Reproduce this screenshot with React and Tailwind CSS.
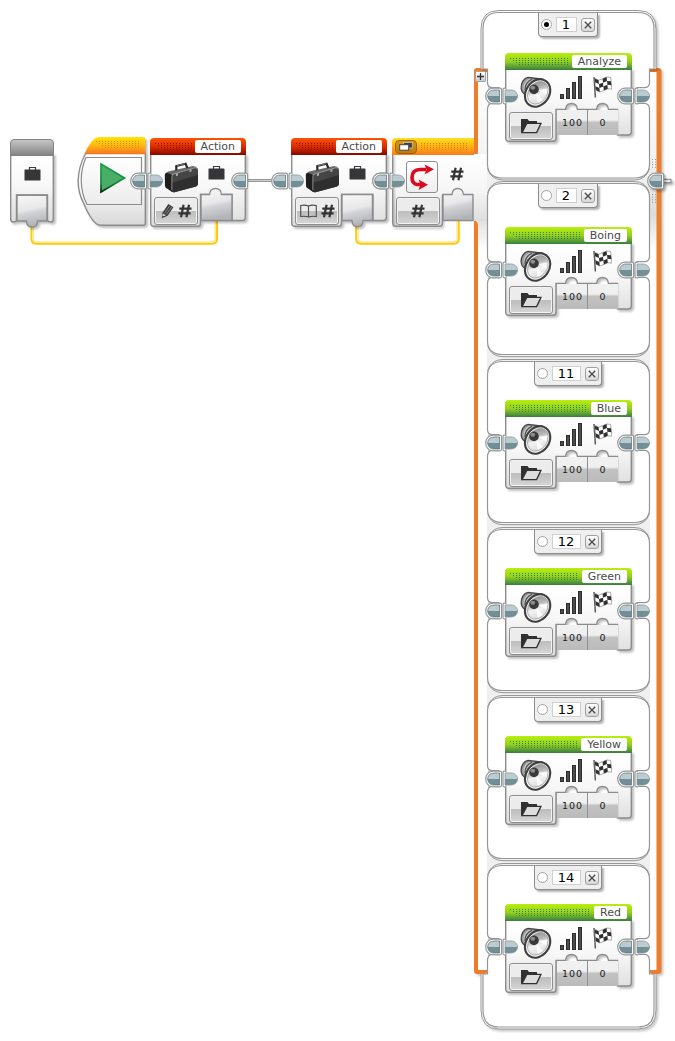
import { useId } from 'react'

const cases = [
  { id: '1', sound: 'Analyze', active: true, height: 171, pad: 43 },
  { id: '2', sound: 'Boing', height: 178, pad: 46 },
  { id: '11', sound: 'Blue', height: 168, pad: 41 },
  { id: '12', sound: 'Green', height: 168, pad: 41 },
  { id: '13', sound: 'Yellow', height: 168, pad: 41 },
  { id: '14', sound: 'Red', height: 167, pad: 41 },
]

const LINE = '#8c8c8c'
const THIN = '#979797'

// Puzzle-shaped body behind a block's contents
function Shape({ width, height, d, children }) {
  const id = useId()
  return (
    <svg
      width={width}
      height={height}
      className="absolute top-0 left-0 overflow-visible drop-shadow-[2px_2px_1px_rgba(0,0,0,0.25)]"
    >
      <defs>
        <linearGradient id={id} x1="0" y1="0" x2="0" y2="1">
          <stop offset="0" stopColor="#ffffff" />
          <stop offset="0.45" stopColor="#f8f8f8" />
          <stop offset="1" stopColor="#dcdcdc" />
        </linearGradient>
      </defs>
      <path d={d} fill={`url(#${id})`} stroke={LINE} strokeWidth="1.4" />
      {children}
    </svg>
  )
}

function Port({ d }) {
  const id = useId()
  return (
    <>
      <defs>
        <linearGradient id={id} x1="0" y1="0" x2="0.2" y2="1">
          <stop offset="0" stopColor="#f8f8f8" />
          <stop offset="0.5" stopColor="#e8e8ea" />
          <stop offset="0.62" stopColor="#d2d3d6" />
          <stop offset="1" stopColor="#b2b4b8" />
        </linearGradient>
      </defs>
      <path d={d} fill={`url(#${id})`} stroke={LINE} strokeWidth="1.4" />
    </>
  )
}

function PlugOut({ className }) {
  return (
    <svg width="18" height="18" className={`absolute overflow-visible ${className}`}>
      <path d="M15 1.2 H8 C3.5 1.2 0.7 5 0.7 9 C0.7 13 3.5 16.8 8 16.8 H15 Q16.6 16.8 16.6 15 V3 Q16.6 1.2 15 1.2 Z" fill="#fff" stroke={THIN} strokeWidth="1.2" />
      <path d="M14.5 3 H9 C5 3 2.7 6 2.7 9 H14.5 Z" fill="#bccbd0" />
      <path d="M14.5 9 H2.7 C2.7 12 5 15 9 15 H14.5 Z" fill="#738f96" />
      <path d="M14.5 3 H9 C5 3 2.7 6 2.7 9 C2.7 12 5 15 9 15 H14.5 Z" fill="none" stroke="#5f7a81" strokeWidth="0.8" />
    </svg>
  )
}

function PlugIn({ className }) {
  return (
    <svg width="17" height="18" className={`absolute ${className}`}>
      <path d="M4 1.2 H2.4 Q1 1.2 1 3 V15 Q1 16.8 2.4 16.8 H4" fill="#fff" stroke={THIN} strokeWidth="1.2" />
      <path d="M3 3 H9 C13 3 15.5 6 15.5 9 H3 Z" fill="#bccbd0" />
      <path d="M3 9 H15.5 C15.5 12 13 15 9 15 H3 Z" fill="#738f96" />
      <path d="M3 3 H9 C13 3 15.5 6 15.5 9 C15.5 12 13 15 9 15 H3 Z" fill="none" stroke="#7d949a" strokeWidth="0.7" />
    </svg>
  )
}

// Grip texture, each row starting one dot further in
function Dots({ color, className }) {
  const id = useId()
  return (
    <svg height="7" className={className} shapeRendering="crispEdges">
      <defs>
        <pattern id={id} width="3" height="2" patternUnits="userSpaceOnUse">
          <rect width="1" height="1" fill={color} />
        </pattern>
      </defs>
      <rect width="100%" height="1" fill={`url(#${id})`} />
      <rect x="3" y="2" width="100%" height="1" fill={`url(#${id})`} />
      <rect x="6" y="4" width="100%" height="1" fill={`url(#${id})`} />
      <rect x="9" y="6" width="100%" height="1" fill={`url(#${id})`} />
    </svg>
  )
}

function Label({ children }) {
  return (
    <span className="flex h-[13px] shrink-0 items-center rounded-[2px] bg-white px-[6px] text-[11px] leading-none text-[#4a4a4a]">
      {children}
    </span>
  )
}

function BigButton({ children }) {
  return (
    <div className="flex h-[28px] w-[44px] items-center justify-center gap-[4px] rounded-[3px] border border-[#8f8f8f] bg-linear-to-b from-[#ececec] from-50% via-[#bdbdbd] via-52% to-[#d6d6d6] shadow-[inset_0_0_0_1px_#f2f2f2]">
      {children}
    </div>
  )
}

function Hash() {
  return (
    <svg width="14" height="14" viewBox="0 0 14 14" stroke="#333" strokeWidth="2.2">
      <path d="M5.6 0.8 L3 13.2 M11 0.8 L8.4 13.2 M1.3 4.7 H13.5 M0.4 9.4 H12.6" />
    </svg>
  )
}

function SmallCase() {
  return (
    <svg width="17" height="15" viewBox="0 0 17 15">
      <path d="M5.5 4 V1.5 H11.5 V4" fill="none" stroke="#3a3a3a" strokeWidth="1.2" />
      <rect x="0.5" y="3.5" width="16" height="11" rx="0.6" fill="#363638" />
    </svg>
  )
}

function BigCase() {
  return (
    <svg width="35" height="31" viewBox="0 0 35 31">
      <path d="M1 11.5 L4 9.5 L29 4 L33 5 L8 12.5 Z" fill="#6a6a6a" />
      <path d="M12.3 8.6 L12.3 4 L21.6 1.8 L23.4 6.2" fill="none" stroke="#2a2a2a" strokeWidth="2.2" />
      <path d="M13 3.6 L21 1.7" stroke="#8a8a8a" strokeWidth="0.8" />
      <path d="M0.8 13 Q0.8 10.6 3 11 L8 12.5 V30 L3 26.5 Q1 25.5 1 24 Z" fill="#1e1e1e" />
      <path d="M7.5 14.5 Q7.5 12.6 9.5 12 L31 5.6 Q34 5 34 7.6 V21.5 Q34 23.6 32 24.4 L10.5 30.2 Q8 30.6 7.5 28.4 Z" fill="#454545" />
      <path d="M7.5 21 L34 13 V21.5 Q34 23.6 32 24.4 L10.5 30.2 Q8 30.6 7.5 28.4 Z" fill="#2f2f2f" />
      <path d="M7.9 28 V14.5 Q8 12.7 9.5 12.2 L31 5.8 Q33.6 5.3 33.6 7.6" fill="none" stroke="#9c9c9c" strokeWidth="0.8" />
      <path d="M12 11.6 l2 -0.6 v2.6 l-2 0.6z M25.5 7.6 l2 -0.6 v2.6 l-2 0.6z" fill="#aaa" />
    </svg>
  )
}

function Speaker() {
  const id = useId()
  return (
    <svg width="32" height="33" viewBox="0 0 32 33">
      <defs>
        <linearGradient id={id} x1="0" y1="0" x2="1" y2="1">
          <stop offset="0" stopColor="#858585" />
          <stop offset="0.35" stopColor="#b5b5b5" />
          <stop offset="0.55" stopColor="#f4f4f4" />
          <stop offset="1" stopColor="#cfcfcf" />
        </linearGradient>
      </defs>
      <path d="M8 1.3 C4 2 0.6 7 1.2 12.5 C1.6 15.5 3 17.5 5.5 18.5 L9 26 L22 3 Z" fill="#9a9a9a" stroke="#444" strokeWidth="1.3" />
      <path d="M9 3 C5 5 3 9 3.6 14 L7 17 L14 4 Z" fill="#c9c9c9" />
      <path d="M5 14 C5 9 8 5 12 3.4" fill="none" stroke="#555" strokeWidth="1.4" />
      <ellipse cx="17.6" cy="17" rx="11.6" ry="14.6" transform="rotate(35 17.6 17)" fill="#f5f5f5" stroke="#3f3f3f" strokeWidth="2.1" />
      <ellipse cx="17.8" cy="16.8" rx="9.3" ry="12.2" transform="rotate(35 17.8 16.8)" fill={`url(#${id})`} stroke="#8a8a8a" strokeWidth="0.6" />
      <path d="M17 14 L27.5 12.5 L26.5 18 Z M16 16 L23 24 L17.5 27 Z" fill="#fff" opacity="0.8" />
      <circle cx="14" cy="13.4" r="4.8" fill="#3a3a3a" />
      <ellipse cx="12.8" cy="11.8" rx="2.4" ry="2" fill="#8c8c8c" />
    </svg>
  )
}

function Bars() {
  return (
    <svg width="23" height="23" viewBox="0 0 23 23" fill="#4c4c4c" stroke="#2e2e2e" strokeWidth="1">
      <rect x="0.5" y="18.5" width="3" height="4" />
      <rect x="6.5" y="12.5" width="3" height="10" />
      <rect x="12.5" y="6.5" width="3" height="16" />
      <rect x="18.5" y="0.5" width="3" height="22" />
    </svg>
  )
}

const flagX = [1.6, 5.6, 9.6, 13.6, 17.6]
const flagY = [2.4, 4.2, 2.8, 1, 1.4]
const flagCells = flagX.slice(1).flatMap((_, c) =>
  [0, 1, 2]
    .filter((r) => (r + c) % 2 === 0)
    .map((r) => {
      const lean = r * 0.4
      const top = r * 3.9
      return `M${flagX[c] + lean} ${flagY[c] + top} L${flagX[c + 1] + lean} ${flagY[c + 1] + top} l0.4 3.9 L${
        flagX[c] + lean + 0.4
      } ${flagY[c] + top + 3.9} Z`
    }),
)

function Flag() {
  return (
    <svg width="19" height="22" viewBox="0 0 19 22">
      <path d="M1 1 L2.4 21.5" stroke="#555" strokeWidth="1.4" />
      <path d="M1.6 2.4 L5.6 4.2 L9.6 2.8 L13.6 1 L17.6 1.4 L18.8 13.1 L14.8 12.7 L10.8 14.5 L6.8 15.9 L2.8 14.1 Z" fill="#fff" stroke="#777" strokeWidth="0.6" />
      <path d={flagCells.join(' ')} fill="#303030" />
    </svg>
  )
}

function Folder() {
  return (
    <svg width="22" height="16" viewBox="0 0 22 16">
      <path d="M1 14.5 V1 H7.5 L9 3 H17 V5.5 H6.5 L3 14.5 Z" fill="#303030" />
      <path d="M2 14.6 L6.8 5.4 H21 L16.6 14.6 Z" fill="#dcdcdc" stroke="#303030" strokeWidth="1.3" />
    </svg>
  )
}

function Pencil() {
  return (
    <svg width="13" height="16" viewBox="0 0 13 16">
      <path d="M0.8 15.2 L1.6 9.5 L7.4 1 L12.4 4.2 L6.6 12.8 Z" fill="#3a3a3a" />
      <path d="M3.4 10.4 L8.8 2.6 M5.2 11.6 L10.8 3.8" stroke="#aaa" strokeWidth="0.7" />
      <path d="M1.4 13.4 L2 10.6 L4.8 12.4 Z" fill="#ddd" />
    </svg>
  )
}

function Book() {
  return (
    <svg width="17" height="15" viewBox="0 0 17 15" fill="none" stroke="#4a4a4a">
      <path d="M0.7 12.5 V1.5 Q5 0.5 8.5 2 Q12 0.5 16.3 1.5 V12.5 Q12 11.8 8.5 13 Q5 11.8 0.7 12.5 Z M8.5 2 V13.5" strokeWidth="1.1" />
    </svg>
  )
}

const SOUND =
  'M0.7 16 V85 Q0.7 88.3 4 88.3 H48 Q51 88.3 51 85 V56.5 H60.5 Q61 50.5 66.5 50.5 Q72 50.5 72.5 56.5 H91.5 Q92 50.5 97.5 50.5 Q103 50.5 103.5 56.5 H112.5 V82 H123 Q126.3 82 126.3 79 V16 Z'

function SoundBlock({ name }) {
  return (
    <div className="relative h-[89px] w-[127px]">
      <Shape width="127" height="89" d={SOUND} />
      <PlugOut className="top-[33.5px] left-[-20px]" />
      <PlugIn className="top-[33.5px] left-[-3px]" />
      <PlugOut className="top-[33.5px] left-[112px]" />
      <PlugIn className="top-[33.5px] left-[129px]" />
      <div className="relative flex h-[17px] items-center gap-[3px] rounded-t-[4px] bg-linear-to-b from-[#b9ef0a] via-[#96cf1c] via-50% to-[#35803a] pr-[5px] pl-[5px]">
        <Dots color="#2a8c38" className="min-w-0 flex-1" />
        <Label>{name}</Label>
      </div>
      <div className="relative flex pt-[6px] pl-[15px]">
        <Speaker />
        <div className="pl-[8px]">
          <Bars />
        </div>
        <div className="pl-[10px]">
          <Flag />
        </div>
      </div>
      <div className="relative flex items-start pt-px pl-[4px]">
        <div className="pt-[2px]">
          <BigButton>
            <Folder />
          </BigButton>
        </div>
        <div className="ml-[3.5px] flex h-[25px] w-[61px] bg-linear-to-b from-[#f0f0f0] from-40% via-[#c2c2c2] via-50% to-[#bababa] text-[9.5px] leading-[25px] tracking-[1px] text-[#1a1a1a]">
          <span className="w-[31px] border-r border-[#8f8f8f] pl-[2px] text-center">100</span>
          <span className="w-[30px] pl-px text-center">0</span>
        </div>
      </div>
    </div>
  )
}

const ACTION =
  'M0.7 16 V85 Q0.7 88.3 4 88.3 H48 Q50.5 88.3 50.5 85 V56.5 H82 V82.5 H92.5 Q95.3 82.5 95.3 79.5 V16 Z'

function ActionBlock({ mode }) {
  const write = mode === 'write'
  return (
    <div className="relative h-[89px] w-[96px]">
      <Shape width="96" height="89" d={ACTION}>
        {write ? (
          <Port d="M51 82.5 V56.5 H59.5 Q60 50.5 65.5 50.5 Q71 50.5 71.5 56.5 H82 V82.5 Z" />
        ) : (
          <Port d="M51 82.5 V56.5 H81.5 V82.5 H72 Q72 88.5 66.5 88.5 Q61 88.5 61 82.5 Z" />
        )}
      </Shape>
      <PlugOut className="top-[33.5px] left-[-20px]" />
      <PlugIn className="top-[33.5px] left-[-3px]" />
      <PlugOut className="top-[33.5px] left-[81px]" />
      <div className="relative flex h-[17px] items-center gap-[3px] rounded-t-[4px] bg-linear-to-b from-[#ff5200] via-[#d62a00] via-55% to-[#860800] pr-[5px] pl-[5px]">
        <Dots color="#8e1000" className="min-w-0 flex-1" />
        <Label>Action</Label>
      </div>
      <div className="relative flex pt-[7px] pl-[14px]">
        <BigCase />
        <div className="pt-[3px] pl-[9px]">
          <SmallCase />
        </div>
      </div>
      <div className="relative pt-[4px] pl-[4px]">
        <BigButton>
          {write ? <Pencil /> : <Book />}
          <Hash />
        </BigButton>
      </div>
    </div>
  )
}

function StartBlock() {
  return (
    <svg width="70" height="92" className="overflow-visible drop-shadow-[2px_2px_1px_rgba(0,0,0,0.25)]">
      <defs>
        <linearGradient id="start-body" x1="0" y1="0" x2="0" y2="1">
          <stop offset="0" stopColor="#fff" />
          <stop offset="0.5" stopColor="#f8f8f8" />
          <stop offset="1" stopColor="#d8d8d8" />
        </linearGradient>
        <linearGradient id="start-panel" x1="0" y1="0" x2="0" y2="1">
          <stop offset="0" stopColor="#fff" />
          <stop offset="1" stopColor="#ececec" />
        </linearGradient>
        <linearGradient id="start-head" x1="0" y1="0" x2="0" y2="1">
          <stop offset="0" stopColor="#ffe600" />
          <stop offset="0.5" stopColor="#ffb611" />
          <stop offset="1" stopColor="#f4751f" />
        </linearGradient>
        <linearGradient id="start-play" x1="0" y1="0" x2="0" y2="1">
          <stop offset="0" stopColor="#16a04c" />
          <stop offset="0.7" stopColor="#11863c" />
          <stop offset="1" stopColor="#03200e" />
        </linearGradient>
        <pattern id="start-dots" width="3" height="2" patternUnits="userSpaceOnUse">
          <rect width="1" height="1" fill="#d98a00" />
        </pattern>
      </defs>
      <path d="M7.5 16.5 C-2 35 -2 52 6 67 C10 77 15 84 18 86.5 Q20 88.3 24 88.3 H65 Q67.3 88.3 67.3 86 V16.5 Z" fill="url(#start-body)" stroke={LINE} strokeWidth="1.4" />
      <path d="M8 20.5 C1.5 35 1.5 53 9 67.5 H63.5 V20.5 Z" fill="url(#start-panel)" stroke={LINE} strokeWidth="1.2" />
      <path d="M6.5 17 C10 9 14 3 18 0.8 Q20 0 22 0 H65 Q67.5 0 67.5 3 V17 Z" fill="url(#start-head)" />
      <g shapeRendering="crispEdges" fill="url(#start-dots)">
        <rect x="18" y="4" width="45" height="1" />
        <rect x="21" y="6" width="42" height="1" />
        <rect x="24" y="8" width="39" height="1" />
        <rect x="27" y="10" width="36" height="1" />
      </g>
      <path d="M23 27 L46.5 41 L23 55 Z" fill="#4aae67" stroke="url(#start-play)" strokeWidth="1.7" />
    </svg>
  )
}

function InputTerminal() {
  return (
    <div className="relative h-[90px] w-[44px]">
      <Shape width="44" height="90" d="M0.7 15 V80 Q0.7 83 3 83 Q5.5 83 6.5 81.5 V56 H37.5 V81.5 Q38.5 83 41 83 Q43.3 83 43.3 80 V15 Z">
        <Port d="M7 82 V56.3 H37 V82 H27.5 Q27.5 88 22 88 Q16.5 88 16.5 82 Z" />
      </Shape>
      <div className="relative h-[17px] rounded-t-[4px] border border-[#828282] bg-linear-to-b from-[#c6c6c6] to-[#858585]" />
      <div className="relative flex justify-center pt-[10px]">
        <SmallCase />
      </div>
    </div>
  )
}

function SwitchBlock() {
  return (
    <div className="relative h-[89px] w-[95px]">
      <svg width="96" height="89" className="absolute top-0 left-0 overflow-visible">
        <defs>
          <linearGradient id="switch-body" x1="0" y1="0" x2="0" y2="1">
            <stop offset="0" stopColor="#fff" />
            <stop offset="0.5" stopColor="#f6f6f6" />
            <stop offset="1" stopColor="#d9d9d9" />
          </linearGradient>
        </defs>
        <path d="M0.7 16 V85 Q0.7 88.3 4 88.3 H48 Q50.5 88.3 50.5 85 V56.5 H81 V83 H95 V16 Z" fill="url(#switch-body)" />
        <path d="M0.7 16 V85 Q0.7 88.3 4 88.3 H48 Q50.5 88.3 50.5 85 V56.5" fill="none" stroke={LINE} strokeWidth="1.4" className="drop-shadow-[1px_2px_1px_rgba(0,0,0,0.3)]" />
        <Port d="M51 82.5 V56.5 H60 Q60.5 50.5 65.5 50.5 Q71 50.5 71.5 56.5 H81 V82.5 Z" />
      </svg>
      <PlugOut className="top-[33.5px] left-[-20px]" />
      <PlugIn className="top-[33.5px] left-[-3px]" />
      <div className="relative flex h-[17px] w-[82px] items-center gap-[4px] rounded-tl-[4px] bg-linear-to-b from-[#ffe11a] via-[#ffb014] via-50% to-[#f77a1e] pl-[3px]">
        <div className="flex h-[14px] w-[22px] items-center justify-center rounded-[4px] border border-[#9c6308] bg-linear-to-b from-[#d99a12] to-[#c07a10]">
          <svg width="14" height="9" viewBox="0 0 14 9">
            <rect x="4.5" y="0.5" width="9" height="5.5" fill="#444" stroke="#ddd" strokeWidth="0.6" />
            <rect x="0.7" y="2.7" width="9" height="5.5" fill="#fff" stroke="#444" />
          </svg>
        </div>
        <svg width="48" height="7" shapeRendering="crispEdges">
          <defs>
            <pattern id="switch-dots" width="3" height="2" patternUnits="userSpaceOnUse">
              <rect width="1" height="1" fill="#d98206" />
            </pattern>
          </defs>
          <rect width="48" height="7" fill="url(#switch-dots)" />
        </svg>
      </div>
      <div className="relative flex pt-[6px] pl-[14px]">
        <div className="flex size-[32px] items-center justify-center rounded-[3px] border border-[#8f8f8f] bg-linear-to-b from-white to-[#eee]">
          <svg width="26" height="27" viewBox="0 0 26 27">
            <path d="M17 5.5 H11 Q3 5.5 3 13.5 Q3 19.5 8 20.5 H12" fill="none" stroke="#dc0a1e" strokeWidth="3.6" />
            <path d="M15.5 0.5 L25 5.3 L15.5 10.5 L17.5 5.5 Z M9.5 15.5 L19 20.8 L9.5 26 L11.5 20.6 Z" fill="#dc0a1e" />
          </svg>
        </div>
        <div className="pt-[6px] pl-[12px]">
          <Hash />
        </div>
      </div>
      <div className="relative pt-[4px] pl-[4px]">
        <BigButton>
          <Hash />
        </BigButton>
      </div>
    </div>
  )
}

function CaseTab({ id, active }) {
  const wide = id.length > 1
  return (
    <div
      className={`relative flex h-[24px] items-center justify-between rounded-b-[4px] border border-t-0 border-[#8c8c8c] bg-[#efefef] px-[2px] shadow-[2px_2px_2px_rgba(0,0,0,0.3)] ${
        wide ? 'w-[68px]' : 'w-[60px]'
      }`}
    >
      <span className="flex size-[11px] items-center justify-center rounded-full border border-[#a5a5a5] bg-white">
        {active && <span className="size-[5px] rounded-full bg-black" />}
      </span>
      <span
        className={`flex h-[15px] items-center justify-center border border-[#d0d0d0] bg-white text-[13px] leading-none text-black ${
          wide ? 'w-[29px]' : 'w-[21px]'
        }`}
      >
        {id}
      </span>
      <span className="flex size-[14px] items-center justify-center rounded-[3px] border border-[#a0a0a0] bg-linear-to-b from-white to-[#d8d8d8]">
        <svg width="8" height="8" viewBox="0 0 8 8" stroke="#4a4a4a" strokeWidth="1.3">
          <path d="M0.8 0.8 L7.2 7.2 M7.2 0.8 L0.8 7.2" />
        </svg>
      </span>
    </div>
  )
}

// Outline of one case: it is pinched in on both sides around the beam
function CaseFrame({ height, beam, first, last }) {
  // inner and outer bottom edges
  const bi = height - (first ? 3 : 4.5)
  const bo = height - (first ? 1 : 2.3)
  const pinchR = `V${beam - 13} Q162.5 ${beam - 8.5} 158 ${beam - 7.8} H150 V${beam + 7.8} H158 Q162.5 ${beam + 8.5} 162.5 ${beam + 14}`
  const pinchL = `V${beam + 14} Q0.5 ${beam + 8.5} 5 ${beam + 7.8} H12 V${beam - 7.8} H5 Q0.5 ${beam - 8.5} 0.5 ${beam - 13}`
  const topEdge = first
    ? 'M12 2.5 H151 Q167 2.5 167 19 V59 H162.5'
    : 'M16 2.5 H147 Q162.5 2.5 162.5 17'
  const topBack = first ? 'V59 H-4 V19 Q-4 2.5 12 2.5 Z' : 'V17 Q0.5 2.5 16 2.5 Z'
  const bottomEdge = last
    ? `V111 H167 V${height - 20} Q167 ${height - 3} 151 ${height - 3} H12 Q-4 ${height - 3} -4 ${height - 20} V111 H0.5`
    : `V${bi - 14} Q162.5 ${bi} 147 ${bi} H16 Q0.5 ${bi} 0.5 ${bi - 14}`
  const inner = [topEdge, pinchR, bottomEdge, pinchL, topBack].join(' ')

  return (
    <svg width="163" height={height} className="absolute top-0 left-0 overflow-visible">
      {!first && <path d="M0 0 H163 V17 H0 Z" fill="#f0f0f0" />}
      {!last && <rect y={height - 20} width="163" height="20" fill="#f0f0f0" />}
      {first && (
        <path
          d="M-6 59 V19 Q-6 0.5 12 0.5 H151 Q169 0.5 169 19 V59"
          fill="#fff"
          stroke={THIN}
          className="drop-shadow-[2px_2px_1px_rgba(0,0,0,0.22)]"
        />
      )}
      {last && (
        <path
          d={`M-6 111 V${height - 20} Q-6 ${height - 1} 12 ${height - 1} H151 Q169 ${height - 1} 169 ${height - 20} V111`}
          fill="#fff"
          stroke={THIN}
          className="drop-shadow-[2px_2px_1px_rgba(0,0,0,0.22)]"
        />
      )}
      <path d={inner} fill="#fff" stroke={THIN} strokeWidth="1.2" />
      {!first && <path d="M0.5 12 Q4 0.5 16 0.5 H147 Q159 0.5 162.5 12" fill="none" stroke={THIN} />}
      {!last && (
        <path
          d={`M0.5 ${bo - 11.5} Q4 ${bo} 16 ${bo} H147 Q159 ${bo} 162.5 ${bo - 11.5}`}
          fill="none"
          stroke={THIN}
        />
      )}
    </svg>
  )
}

function Case({ item, first, last }) {
  return (
    <section className="relative w-[163px] shrink-0" style={{ height: item.height }}>
      <CaseFrame height={item.height} beam={item.pad + 42.5} first={first} last={last} />
      <div className="flex justify-center pt-[3px] pr-[2px]">
        <CaseTab id={item.id} active={item.active} />
      </div>
      <div className="pl-[18px]" style={{ paddingTop: item.pad - 27 }}>
        <SoundBlock name={item.sound} />
      </div>
    </section>
  )
}

function Rails() {
  return (
    <svg width="200" height="906" className="absolute top-[68px] left-[474px] overflow-visible">
      <defs>
        <linearGradient id="rail" x1="0" y1="0" x2="0" y2="1">
          <stop offset="0" stopColor="#fff" />
          <stop offset="0.09" stopColor="#f4f4f4" />
          <stop offset="0.16" stopColor="#dcdcdc" />
          <stop offset="0.2" stopColor="#fff" />
          <stop offset="1" stopColor="#fff" />
        </linearGradient>
      </defs>
      <g className="drop-shadow-[2px_2px_1px_rgba(0,0,0,0.2)]">
        <path d="M4 3 H14 V902 H4 Z M175 3 H183 V902 H175 Z" fill="url(#rail)" />
        <path d="M13 3.5 Q13 0 10 0 H3 Q0 0 0 3 V87 H2 Q4 86 4 83 V4 H13 Z" fill="#ee7d2b" />
        <path d="M0 153 H2 Q4 154 4 157 V902 H13.5 Q13.5 906 10 906 H3 Q0 906 0 903 Z" fill="#ee7d2b" />
        <path d="M175.5 3.5 Q175.5 0 179 0 H184 Q187.5 0 187.5 3 V903 Q187.5 906 184 906 H179 Q175.5 906 175.5 902 H182.5 V4 H175.5 Z" fill="#ee7d2b" />
      </g>
    </svg>
  )
}

function Wires() {
  return (
    <svg width="675" height="260" className="absolute top-0 left-0">
      <g fill="none" strokeWidth="2">
        <path d="M31.5 226 V239 Q31.5 243.7 36 243.7 H212.5 Q217 243.7 217 239 V220" stroke="#ffc90a" />
        <path d="M33.2 226 V238 Q33.2 241.9 37 241.9 H211.5 Q215.3 241.9 215.3 238 V220" stroke="#ffe98c" strokeWidth="1.5" />
        <path d="M356.2 226 V239 Q356.2 243.7 361 243.7 H454 Q458.8 243.7 458.8 239 V220" stroke="#ffc90a" />
        <path d="M358 226 V238 Q358 241.9 362 241.9 H453 Q457 241.9 457 238 V220" stroke="#ffe98c" strokeWidth="1.5" />
      </g>
      <path d="M246 180.5 H272" stroke="#999" strokeWidth="3" />
      <path d="M246 180.5 H272" stroke="#ccc" strokeWidth="1" />
    </svg>
  )
}

export default function App() {
  return (
    <main className="relative h-[1041px] w-[675px] overflow-hidden bg-white font-['DejaVu_Sans',sans-serif]">
      <Wires />
      <div className="absolute top-[139px] left-[10px]">
        <InputTerminal />
      </div>
      <div className="absolute top-[137px] left-[78px]">
        <StartBlock />
      </div>
      <div className="absolute top-[138px] left-[150px]">
        <ActionBlock mode="write" />
      </div>
      <div className="absolute top-[138px] left-[291px]">
        <ActionBlock mode="read" />
      </div>

      <Rails />
      <div className="absolute top-[138px] left-[392px]">
        <SwitchBlock />
      </div>
      <div className="absolute top-[10px] left-[487px] flex flex-col">
        {cases.map((item, i) => (
          <Case key={item.id} item={item} first={i === 0} last={i === cases.length - 1} />
        ))}
      </div>

      <span className="absolute top-[71px] left-[475px] flex size-[11px] items-center justify-center rounded-[1px] border border-[#a5a5a5] bg-linear-to-b from-white to-[#ccc]">
        <svg width="7" height="7" viewBox="0 0 7 7" stroke="#333" strokeWidth="1.3">
          <path d="M3.5 0 V7 M0 3.5 H7" />
        </svg>
      </span>
      <svg width="26" height="50" viewBox="0 0 26 50" className="absolute top-[157px] left-[647px] overflow-visible">
        <g stroke="#999" strokeWidth="1" strokeDasharray="1 1.6">
          <path d="M5.5 2 V12 M8.5 2 V12 M5.5 37 V47 M8.5 37 V47" />
        </g>
        <g className="drop-shadow-[2px_2px_1px_rgba(0,0,0,0.3)]">
          <path d="M14 24 H24.5" stroke="#8c8c8c" strokeWidth="4.5" />
          <path d="M14 24 H23.5" stroke="#ececec" strokeWidth="2.2" />
        </g>
      </svg>
      <PlugOut className="top-[172px] left-[647px] drop-shadow-[2px_2px_1px_rgba(0,0,0,0.3)]" />
    </main>
  )
}
